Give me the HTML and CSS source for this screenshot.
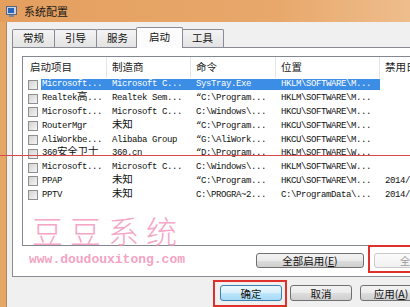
FILE: index.html
```html
<!DOCTYPE html>
<html lang="zh-CN">
<head>
    <meta charset="UTF-8">
    <title>系统配置</title>
    <link rel="stylesheet" href="styles.css">
</head>
<body>
    <div class="window">
        <div class="titlebar">
            <svg class="app-icon" width="11" height="11" viewBox="0 0 11 11">
                <rect x="0.5" y="0.5" width="10" height="8" fill="#c9d2de" stroke="#56667c"/>
                <rect x="2" y="2" width="6" height="5" fill="#2d62bb"/>
                <rect x="3" y="9" width="5" height="2" fill="#7a8696"/>
            </svg>
            <span>系统配置</span>
        </div>
        <div class="frame">
            <div class="client">
                <div class="tabs">
                    <div class="tab">常规</div>
                    <div class="tab">引导</div>
                    <div class="tab">服务</div>
                    <div class="tab active">启动</div>
                    <div class="tab">工具</div>
                </div>
                <div class="panel">
                    <div class="list">
                        <div class="list-head">
                            <div class="head-cell first">启动项目</div>
                            <div class="head-cell">制造商</div>
                            <div class="head-cell">命令</div>
                            <div class="head-cell">位置</div>
                            <div class="head-cell">禁用日期</div>
                        </div>
                        <div class="list-row selected">
                            <div class="check"></div>
                            <div class="cell name">Microsoft...</div>
                            <div class="cell">Microsoft C...</div>
                            <div class="cell">SysTray.Exe</div>
                            <div class="cell">HKLM\SOFTWARE\M...</div>
                            <div class="cell date"></div>
                        </div>
                        <div class="list-row">
                            <div class="check"></div>
                            <div class="cell name">Realtek<span class="cjk">高</span>...</div>
                            <div class="cell">Realtek Sem...</div>
                            <div class="cell">“C:\Program...</div>
                            <div class="cell">HKLM\SOFTWARE\M...</div>
                            <div class="cell date"></div>
                        </div>
                        <div class="list-row">
                            <div class="check"></div>
                            <div class="cell name">Microsoft...</div>
                            <div class="cell">Microsoft C...</div>
                            <div class="cell">C:\Windows\...</div>
                            <div class="cell">HKCU\SOFTWARE\M...</div>
                            <div class="cell date"></div>
                        </div>
                        <div class="list-row">
                            <div class="check"></div>
                            <div class="cell name">RouterMgr</div>
                            <div class="cell"><span class="cjk">未知</span></div>
                            <div class="cell">“C:\Program...</div>
                            <div class="cell">HKCU\SOFTWARE\M...</div>
                            <div class="cell date"></div>
                        </div>
                        <div class="list-row">
                            <div class="check"></div>
                            <div class="cell name">AliWorkbe...</div>
                            <div class="cell">Alibaba Group</div>
                            <div class="cell">“G:\AliWork...</div>
                            <div class="cell">HKCU\SOFTWARE\M...</div>
                            <div class="cell date"></div>
                        </div>
                        <div class="list-row">
                            <div class="check"></div>
                            <div class="cell name">360<span class="cjk">安全卫士</span></div>
                            <div class="cell">360.cn</div>
                            <div class="cell">“D:\Program...</div>
                            <div class="cell">HKLM\SOFTWARE\W...</div>
                            <div class="cell date"></div>
                        </div>
                        <div class="list-row">
                            <div class="check"></div>
                            <div class="cell name">Microsoft...</div>
                            <div class="cell">Microsoft C...</div>
                            <div class="cell">C:\Windows\...</div>
                            <div class="cell">HKLM\SOFTWARE\W...</div>
                            <div class="cell date"></div>
                        </div>
                        <div class="list-row">
                            <div class="check"></div>
                            <div class="cell name">PPAP</div>
                            <div class="cell"><span class="cjk">未知</span></div>
                            <div class="cell">“C:\Program...</div>
                            <div class="cell">HKCU\SOFTWARE\M...</div>
                            <div class="cell date">2014/10/23 9:41</div>
                        </div>
                        <div class="list-row">
                            <div class="check"></div>
                            <div class="cell name">PPTV</div>
                            <div class="cell"><span class="cjk">未知</span></div>
                            <div class="cell">C:\PROGRA~2...</div>
                            <div class="cell">C:\ProgramData\...</div>
                            <div class="cell date">2014/10/23 9:41</div>
                        </div>
                    </div>
                    <div class="panel-actions">
                        <button class="btn wide">全部启用(<u>E</u>)</button>
                        <button class="btn wide faded">全部禁用(<u>D</u>)</button>
                    </div>
                </div>
                <div class="dialog-actions">
                    <button class="btn default">确定</button>
                    <button class="btn">取消</button>
                    <button class="btn">应用(<u>A</u>)</button>
                    <button class="btn">帮助</button>
                </div>
            </div>
        </div>

        <div class="watermark-title">豆豆系统</div>
        <div class="watermark-url">www.doudouxitong.com</div>
        <div class="mark-line"></div>
        <div class="mark-box ok-box"></div>
        <div class="mark-box disable-box"></div>
    </div>
</body>
</html>
```

FILE: styles.css
```css
body {
    margin: 0;
    background-color: #f0f0f0;
    font-family: "Noto Sans CJK SC", "Liberation Sans", sans-serif;
    overflow: hidden;
}
.window {
    position: relative;
    width: 503px;
    height: 330px;
    display: flex;
    flex-direction: column;
    background: linear-gradient(to right, #e6a766, #edbb88);
}
.titlebar {
    height: 22px;
    flex-shrink: 0;
    display: flex;
    align-items: center;
    gap: 7px;
    padding-left: 6px;
    background: linear-gradient(to right, #e49f5f, #e8a86b 55%, #f2cca4);
    font-size: 11px;
    color: #1a1a1a;
}
.app-icon {
    display: block;
}
.frame {
    flex: 1;
    display: flex;
    padding: 0 6px;
}
.client {
    flex: 1;
    background-color: #f0f0f0;
    border-left: 1px solid #a98864;
    padding: 5px 5px 0 5px;
}
.tabs {
    display: flex;
    align-items: flex-end;
    height: 21px;
    margin-bottom: -1px;
}
.tab {
    box-sizing: border-box;
    height: 18px;
    margin-bottom: 1px;
    margin-right: -1px;
    padding: 0 10px;
    border: 1px solid #898c95;
    border-bottom: none;
    border-radius: 2px 2px 0 0;
    background: linear-gradient(#f4f4f4, #e3e3e3);
    font-size: 10.5px;
    line-height: 16px;
    color: #111;
}
.tab.active {
    position: relative;
    z-index: 1;
    height: 21px;
    margin: 0 -2px;
    padding: 0 12px;
    background: #fcfcfc;
    line-height: 18px;
}
.panel {
    border: 1px solid #898c95;
    background-color: #fff;
    padding: 8px 9px 8px 9px;
}
.list {
    height: 190px;
    box-sizing: border-box;
    border: 1px solid #828790;
    background-color: #fff;
    overflow: hidden;
}
.list-head,
.list-row {
    display: grid;
    grid-template-columns: 18px 66px 84px 85px 104px 1fr;
}
.list-head {
    height: 21px;
}
.head-cell {
    border-right: 1px solid #e3e5e8;
    padding-left: 5px;
    font-size: 10.5px;
    line-height: 20px;
    color: #222;
    white-space: nowrap;
    overflow: hidden;
}
.head-cell.first {
    grid-column: span 2;
    padding-left: 7px;
}
.list-row {
    height: 13.8px;
    align-items: center;
    font-family: "Liberation Mono", "Noto Sans CJK SC", monospace;
    font-size: 9px;
    letter-spacing: -0.4px;
    color: #111;
}
.cell {
    height: 11px;
    line-height: 11px;
    padding-left: 5px;
    white-space: nowrap;
}
.cell.name {
    padding-left: 1px;
}
.cjk {
    font-family: "Noto Sans CJK SC", sans-serif;
    font-size: 10.5px;
    line-height: 0;
    letter-spacing: -0.2px;
}
.check {
    width: 10px;
    height: 10px;
    margin-left: 5px;
    box-sizing: border-box;
    border: 1px solid #8f8f8f;
    background: linear-gradient(135deg, #d2d2d2, #f5f5f5);
}
.list-row.selected .cell {
    background-color: #3b8de5;
    color: #fff;
}
.list-row.selected .cell.date {
    background: none;
}
.panel-actions {
    display: flex;
    justify-content: flex-end;
    gap: 10px;
    margin-top: 7px;
}
.btn {
    box-sizing: border-box;
    width: 62px;
    height: 16px;
    padding: 0;
    border: 1px solid #707070;
    border-radius: 3px;
    background: linear-gradient(#f3f3f3, #ebebeb 50%, #dddddd 51%, #cfcfcf);
    font-family: "Noto Sans CJK SC", "Liberation Sans", sans-serif;
    font-size: 10.5px;
    line-height: 13px;
    color: #111;
}
.btn u {
    text-decoration: underline;
}
.btn.wide {
    width: 108px;
    height: 15px;
}
.btn.faded {
    background: linear-gradient(#fbfbfb, #f1f1f1);
    border-color: #c9c9c9;
    color: #9a9a9a;
}
.btn.default {
    border-color: #3c7fb1;
    background: linear-gradient(#eaf6fd, #d9f0fc 50%, #bee6fd 51%, #a7d9f5);
}
.dialog-actions {
    display: flex;
    justify-content: flex-end;
    gap: 8px;
    margin-top: 8px;
}
.watermark-title {
    position: absolute;
    left: 32px;
    top: 207px;
    font-family: "Noto Sans CJK SC", sans-serif;
    font-weight: 300;
    font-size: 31px;
    letter-spacing: 7px;
    color: #f5a6c5;
}
.watermark-url {
    position: absolute;
    left: 29px;
    top: 252px;
    font-family: "Liberation Mono", monospace;
    font-weight: bold;
    font-size: 13px;
    color: #f3a3c3;
}
.mark-line {
    position: absolute;
    left: 0;
    right: 0;
    top: 155px;
    height: 1px;
    background-color: #d84848;
}
.mark-box {
    position: absolute;
    box-sizing: border-box;
    border: 2px solid #e0302c;
}
.ok-box {
    left: 213px;
    top: 280px;
    width: 74px;
    height: 27px;
}
.disable-box {
    left: 368px;
    top: 245px;
    width: 80px;
    height: 28px;
}
```
